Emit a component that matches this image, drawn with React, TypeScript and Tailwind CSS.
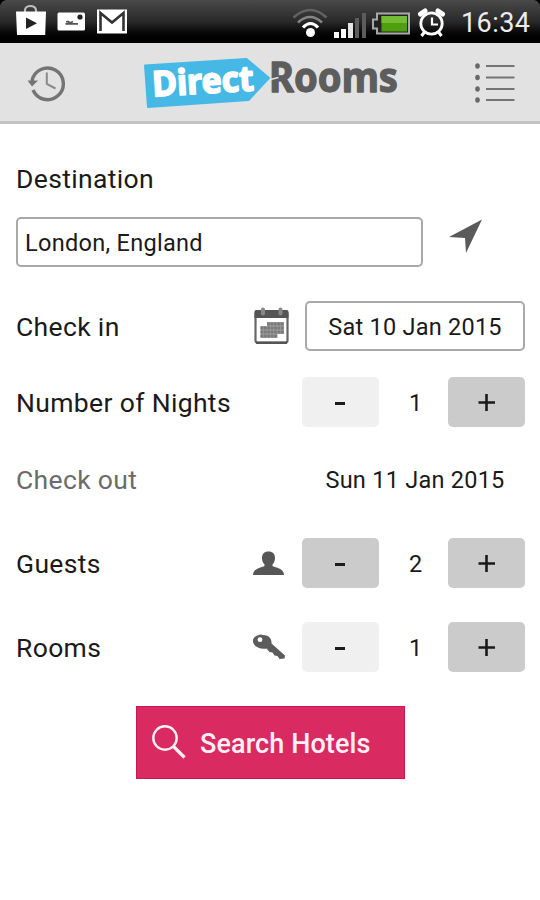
import { useState } from "react";

function StatusBar() {
  return (
    <div className="h-[43px] bg-gradient-to-b from-[#4a4a4a] via-[#292929] via-50% to-black">
      <svg width="540" height="43" viewBox="0 0 540 43" fill="none">
        {/* Rounded display corners */}
        <path d="M0 0h6Q1 1 0 6z M540 0h-6q5 1 6 6z" fill="#000" />

        {/* Play store bag */}
        <path d="M25 12.500v-2.500a5.500 4 0 0 1 11 0v2.500" stroke="#bdbdbd" strokeWidth="2.200" />
        <path d="M16 11.500h30l-.800 23.500H17z" fill="#fff" />
        <path d="M26 17.500v11.500l11-5.700z" fill="#222" />

        {/* Picture card */}
        <rect x="57.500" y="12.500" width="27.500" height="18" rx="1.500" fill="#fff" />
        <circle cx="80" cy="17" r="2.600" fill="#222" />
        <path d="M65.500 23.800h12.500M66 22l2-.5 2 1.500 3-1.500" stroke="#555" strokeWidth="1.800" />

        {/* Mail */}
        <rect x="97" y="9.500" width="30" height="24" fill="#fff" />
        <path d="M100.500 31V13l11.500 9.500L123.500 13v18" stroke="#333" strokeWidth="2.600" />

        {/* Wifi */}
        <path d="M293.500 17.500q17-15 33 0" stroke="#626262" strokeWidth="2.600" />
        <path d="M298 22.500q12-11 24 0" stroke="#858585" strokeWidth="2.600" />
        <path d="M303 27.500q7.500-8 15 0" stroke="#fff" strokeWidth="3.200" />
        <circle cx="310.500" cy="32.500" r="4.500" fill="#fff" />

        {/* Signal */}
        <path d="M334 32h5v6h-5z M341 29h5v9h-5z" fill="#fff" />
        <path d="M348 23h5v15h-5z" fill="#e4e4e4" />
        <path d="M355 18h4v20h-4z M362 13h4v25h-4z" fill="#5c5c5c" />

        {/* Battery */}
        <path d="M377 13.500h32v20h-32v-5h-4v-9h4z" fill="#222" stroke="#a9a9a9" strokeWidth="2" />
        <path d="M381.500 16H407v15.500h-25.500z" fill="#4f9f0d" />
        <path d="M381.500 16H407v7h-25.500z" fill="#73bd35" />

        {/* Alarm clock */}
        <circle cx="431.500" cy="23.500" r="10.700" stroke="#fff" strokeWidth="2.800" />
        <path d="M432 17.500v7h6" stroke="#fff" strokeWidth="2.200" />
        <path d="M420.500 14l4.500-3M442.500 14l-4.500-3" stroke="#fff" strokeWidth="5" strokeLinecap="round" />
        <path d="M424.500 32l-3 4M438.500 32l3 4" stroke="#fff" strokeWidth="3" />

        <text x="461" y="32" fill="#ececec" fontFamily="Roboto, sans-serif" fontSize="27" textLength="69">
          16:34
        </text>
      </svg>
    </div>
  );
}

function HistoryIcon() {
  return (
    <svg width="40" height="38" viewBox="27 64 40 38" fill="none">
      <path d="M32 81A15.800 15.800 0 1 1 33 90" stroke="#747474" strokeWidth="3.400" />
      <path d="M27.500 80.500h10.500l-6 6z" fill="#747474" />
      <path d="M46.800 72.500v11.500l8.700 4.500" stroke="#8a8a8a" strokeWidth="2" />
    </svg>
  );
}

function Logo() {
  return (
    <svg className="-mr-[32px]" width="290" height="78" viewBox="141.500 43 290 78">
      <path
        d="M144.500 65.500L246 59L268.500 78L248 100L147.500 107z"
        fill="#45b8e6"
        stroke="#45b8e6"
        strokeWidth="2"
        strokeLinejoin="round"
      />
      <g fontFamily="'Noto Sans', 'Open Sans', sans-serif" fontWeight="700" strokeLinejoin="round">
        <text
          x="152.500"
          y="96.500"
          fontSize="35"
          fill="#fff"
          stroke="#fff"
          strokeWidth="1.700"
          textLength="101.500"
          lengthAdjust="spacingAndGlyphs"
          transform="rotate(-3.500 152.500 96.500)"
        >
          Direct
        </text>
        <text
          x="268.500"
          y="92"
          fontSize="40.500"
          fill="#5d5d5d"
          stroke="#5d5d5d"
          strokeWidth="1.300"
          textLength="129"
          lengthAdjust="spacingAndGlyphs"
        >
          Rooms
        </text>
      </g>
      {/* Notch where the tag tip meets the R */}
      <path d="M270 79.500l8-2" stroke="#e2e2e2" strokeWidth="1.500" />
    </svg>
  );
}

function MenuIcon() {
  return (
    <svg width="42" height="42" viewBox="474 62 42 42">
      {[66, 77.5, 89, 100].map((y) => (
        <g key={y}>
          <ellipse cx="477.500" cy={y} rx="2.300" ry="2.800" fill="#686868" />
          <path d={`M486 ${y}h28.500`} stroke="#747474" strokeWidth="2" />
        </g>
      ))}
    </svg>
  );
}

function CalendarIcon() {
  return (
    <svg width="36" height="38" viewBox="254 307 36 38">
      <rect x="255.500" y="311.500" width="32" height="31" rx="2" fill="#fff" stroke="#666" strokeWidth="2.200" />
      <path d="M256 310h31q1.500 0 1.500 2v6h-34v-6q0-2 1.500-2z" fill="#555" />
      <path d="M256 342.800h31" stroke="#555" strokeWidth="2.400" />
      <path d="M263 309.500v4M280.500 309.500v4" stroke="#888" strokeWidth="4" strokeLinecap="round" />
      <path d="M267 324h17M260.500 328h23.500M260.500 332h23.500M260.500 336h17" stroke="#a0a0a0" strokeWidth="4" />
      <path
        d="M267 324h17M260.500 328h23.500M260.500 332h23.500M260.500 336h17"
        stroke="#7a7a7a"
        strokeWidth="2.800"
        strokeDasharray="2.800 .6"
      />
    </svg>
  );
}

function PersonIcon() {
  return (
    <svg width="33" height="26" viewBox="252 549 33 26" fill="#565656">
      <path d="M262 557c0-4 2-6.500 6.500-6.500s6.500 2.500 6.500 6.500c0 3-1 5-2.500 6.500v1.500c4 2 11.500 2.500 11.500 9h-31c0-6.500 7.500-7 11.500-9v-1.500C263 562 262 560 262 557z" />
    </svg>
  );
}

function KeyIcon() {
  return (
    <svg width="34" height="28" viewBox="252 633 34 28">
      <path
        d="M262 635c6-.5 10 3 9.500 8.500L285 655.500l-.500 3-5 .500-2-3-3-.500-2-3-3-.500-3-3.500c-6 1.500-13-2-13.500-7-.500-4 4-7 9-7z"
        fill="#5c5c5c"
      />
      <circle cx="260" cy="639.700" r="2.400" fill="#fff" />
    </svg>
  );
}

const label = "flex-1 pt-[2px] text-[26.5px] leading-none tracking-[0.35px]";
const stepButton = "flex h-[50px] w-[77px] items-center justify-center rounded-[5px]";

type StepperProps = {
  value: number;
  min?: number;
  onChange: (value: number) => void;
};

function Stepper({ value, min = 1, onChange }: StepperProps) {
  return (
    <div className="flex items-center text-[23.5px]">
      <button
        aria-label="Decrease"
        disabled={value <= min}
        onClick={() => onChange(value - 1)}
        className={`${stepButton} ${value <= min ? "bg-[#f0f0f0]" : "bg-[#cbcbcb]"}`}
      >
        <span className="mt-[3px] mr-0.5 h-[3px] w-[10px] bg-[#1c1c1c]" />
      </button>
      <span className="w-[69px] pt-[3px] pl-1 text-center">{value}</span>
      <button
        aria-label="Increase"
        onClick={() => onChange(value + 1)}
        className={`${stepButton} bg-[#cbcbcb]`}
      >
        <svg width="18" height="18" viewBox="0 0 18 18" stroke="#1a1a1a" strokeWidth="2.600">
          <path d="M.5 9.500h16.500M8.500 1v17" />
        </svg>
      </button>
    </div>
  );
}

export default function App() {
  const [destination, setDestination] = useState("London, England");
  const [nights, setNights] = useState(1);
  const [guests, setGuests] = useState(2);
  const [rooms, setRooms] = useState(1);

  const checkOut = new Date(2015, 0, 10 + nights);
  const checkOutText = [
    checkOut.toLocaleDateString("en-US", { weekday: "short" }),
    checkOut.getDate(),
    checkOut.toLocaleDateString("en-US", { month: "short" }),
    checkOut.getFullYear(),
  ].join(" ");

  return (
    <div className="h-[900px] w-[540px] overflow-hidden bg-white font-['Roboto',sans-serif] text-[#1a1a1a]">
      <StatusBar />

      <header className="flex h-[81px] items-start justify-between border-b-[3px] border-[#c2c2c2] bg-[#e2e2e2] pr-6 pl-[27px]">
        <div className="mt-[21px]">
          <HistoryIcon />
        </div>
        <Logo />
        <div className="mt-[19px]">
          <MenuIcon />
        </div>
      </header>

      <main className="flex flex-col pr-[15px] pl-4">
        <div className="mt-[29px] flex h-[50px] items-center">
          <span className={label}>Destination</span>
        </div>

        <div className="mt-[14px] flex h-[50px]">
          <input
            value={destination}
            onChange={(e) => setDestination(e.target.value)}
            className="h-[50px] w-[407px] rounded-[5px] border-2 border-[#a9a9a9] px-[7px] pt-px text-[23.5px] tracking-[0.3px] outline-none"
          />
          <svg className="mt-0.5 ml-[25px]" width="36" height="36" viewBox="448 219 36 36">
            <path d="M482 219.500L466 253l-1-15-16-1z" fill="#5a5a5a" />
          </svg>
        </div>

        <div className="mt-[34px] flex h-[50px] items-center">
          <span className={label}>Check in</span>
          <CalendarIcon />
          <button className="ml-[15px] h-[50px] w-[220px] rounded-[5px] border-2 border-[#a9a9a9] pt-[3px] text-[23.5px] tracking-[0.25px]">
            Sat 10 Jan 2015
          </button>
        </div>

        <div className="mt-[26px] flex h-[50px] items-center">
          <span className={label}>Number of Nights</span>
          <Stepper value={nights} onChange={setNights} />
        </div>

        <div className="mt-[27px] flex h-[50px] items-center">
          <span className={`${label} text-[#6b6b6b]`}>Check out</span>
          <span className="w-[220px] pt-[3px] text-center text-[23.5px] tracking-[0.25px]">{checkOutText}</span>
        </div>

        <div className="mt-[34px] flex h-[50px] items-center">
          <span className={label}>Guests</span>
          <div className="mr-[17px]">
            <PersonIcon />
          </div>
          <Stepper value={guests} onChange={setGuests} />
        </div>

        <div className="mt-[34px] flex h-[50px] items-center">
          <span className={label}>Rooms</span>
          <div className="mr-4">
            <KeyIcon />
          </div>
          <Stepper value={rooms} onChange={setRooms} />
        </div>

        <button className="mt-[34px] ml-[120px] flex h-[73px] w-[269px] items-center border border-[#cc1652] bg-[#d92b62] pl-[15px] text-[27px] font-medium text-[#fff0f5]">
          <svg width="34" height="35" viewBox="0 0 34 35" fill="none" stroke="#fff0f5">
            <circle cx="13" cy="13" r="11.700" strokeWidth="2.400" />
            <path d="M21.500 21.500L32.500 32.500" strokeWidth="3.200" />
          </svg>
          <span className="ml-[14px] pt-1 tracking-[0.1px]">Search Hotels</span>
        </button>
      </main>
    </div>
  );
}
